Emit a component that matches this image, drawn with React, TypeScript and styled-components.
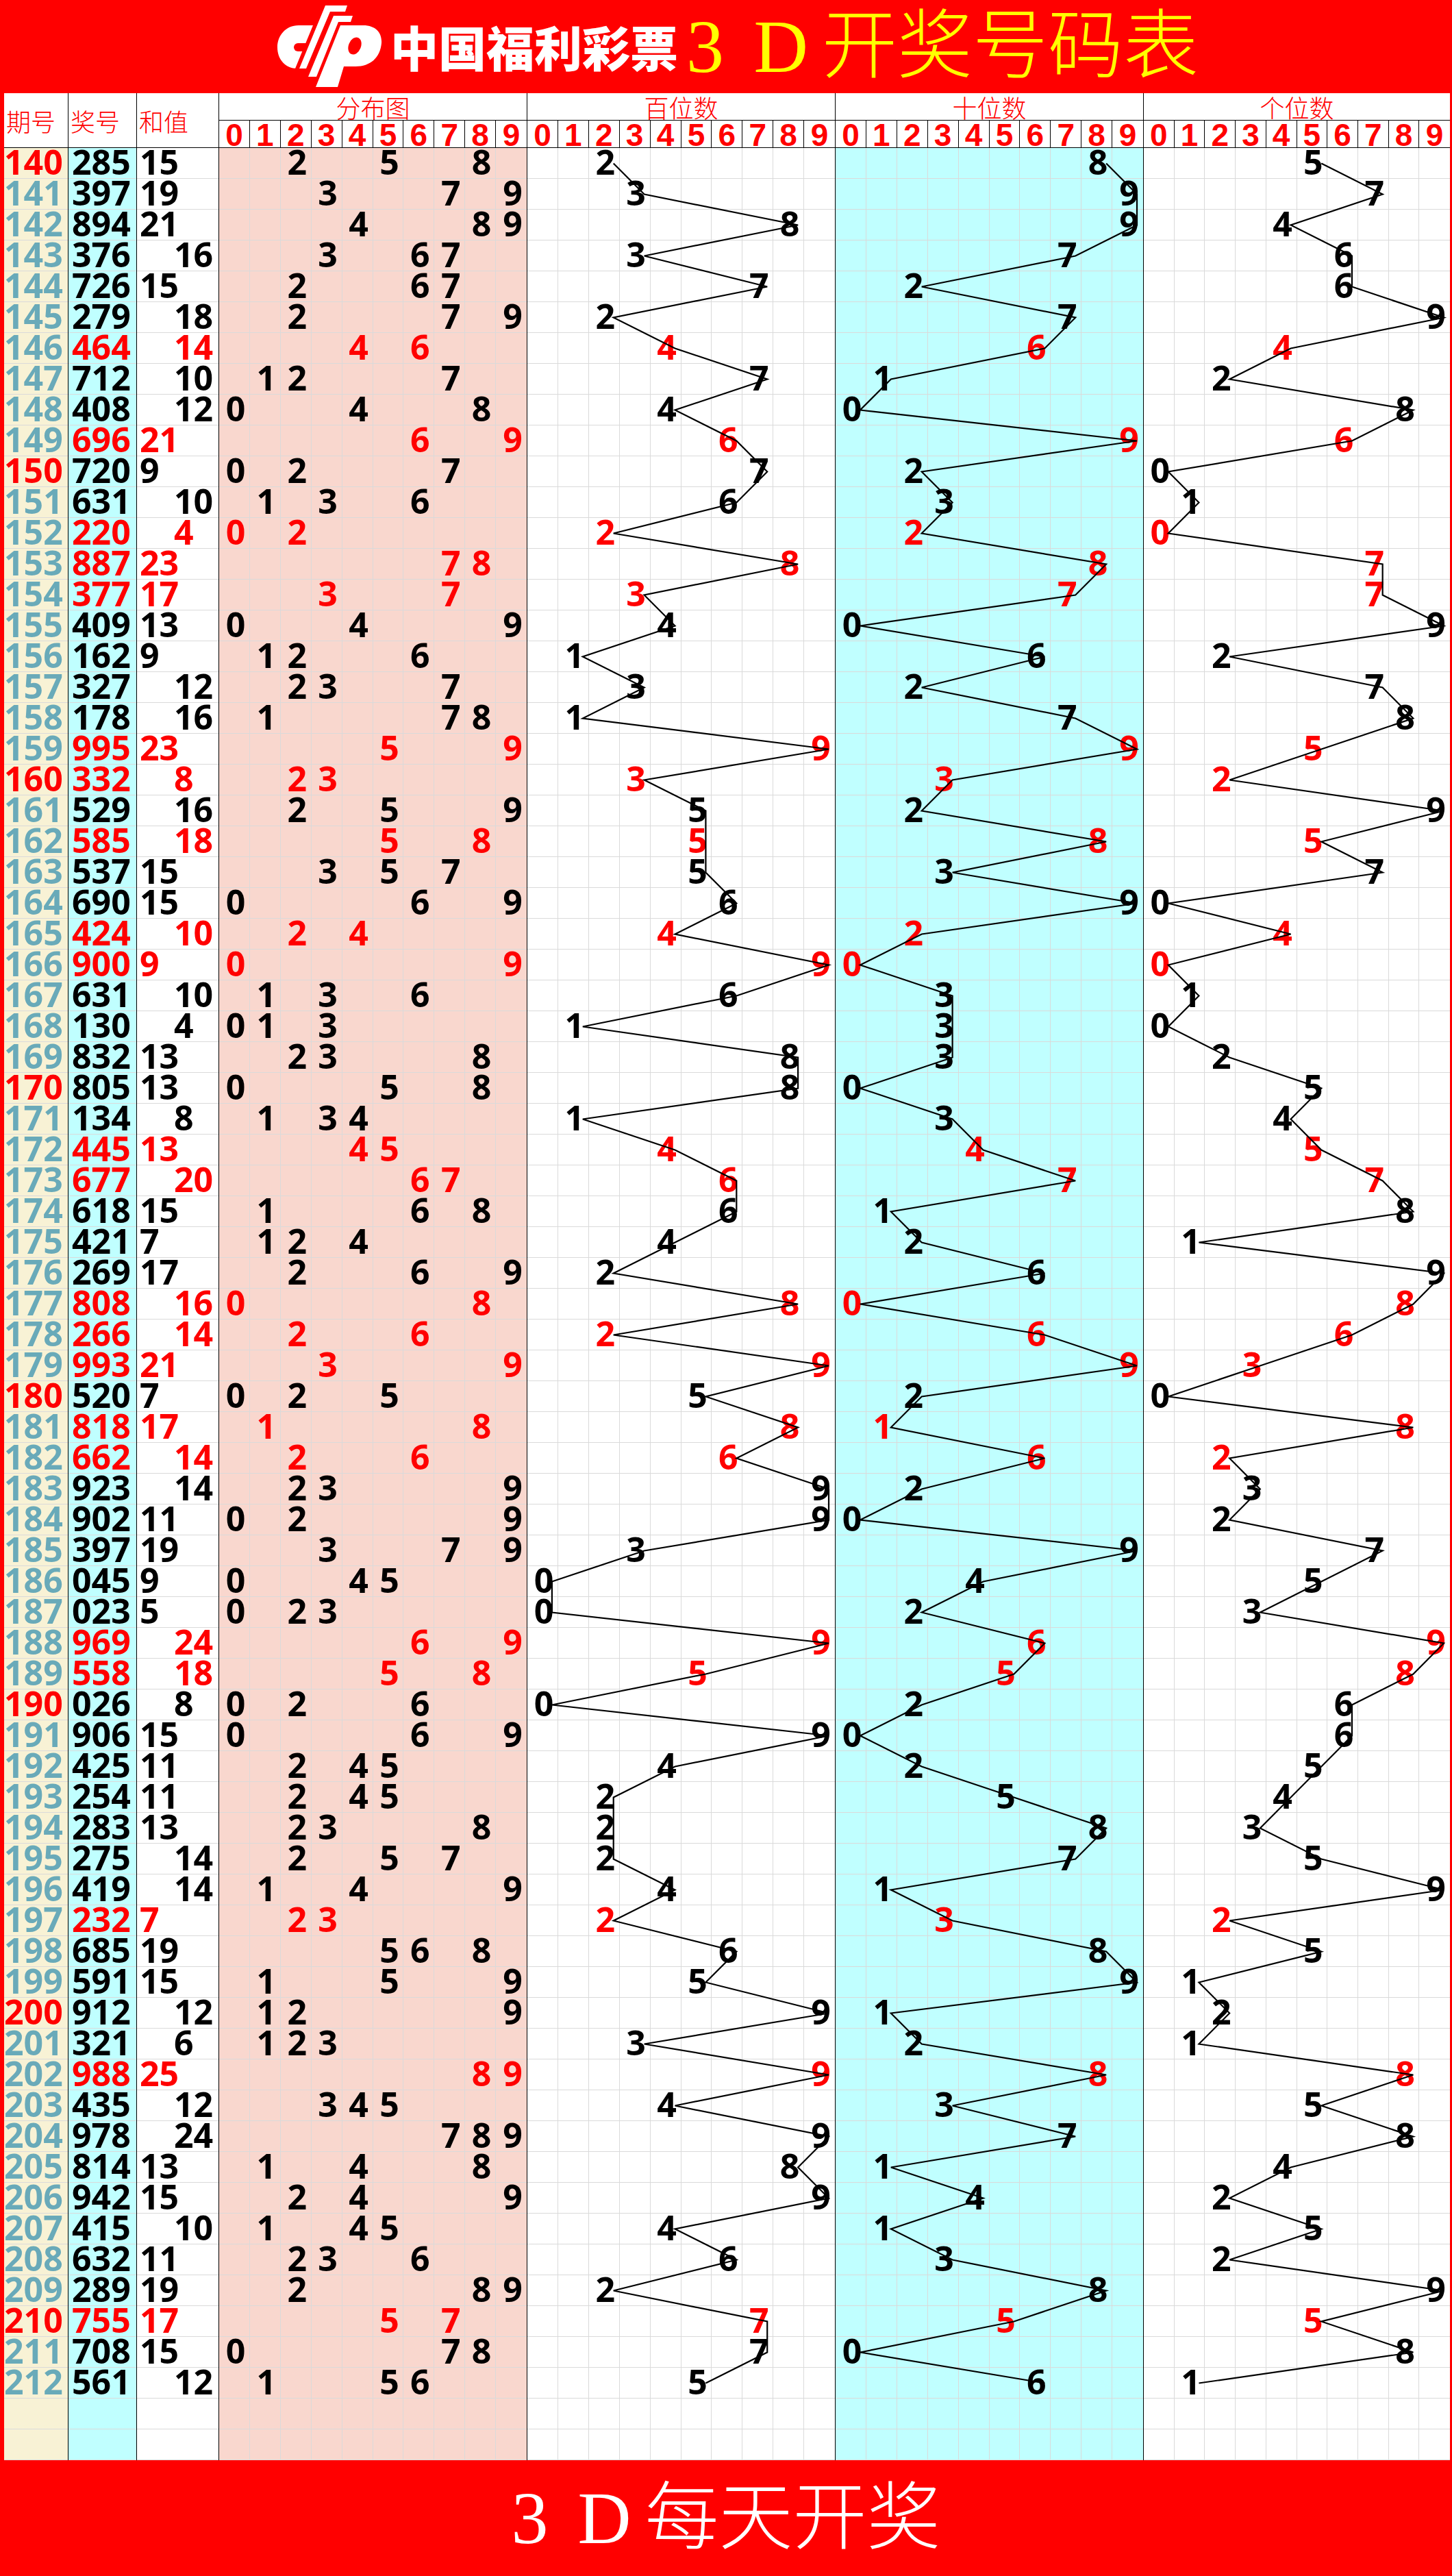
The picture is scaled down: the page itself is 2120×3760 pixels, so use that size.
import React from 'react'
import styled, { createGlobalStyle } from 'styled-components'

const DRAWS = [
  '140 285', '141 397', '142 894', '143 376', '144 726', '145 279', '146 464', '147 712', '148 408', '149 696',
  '150 720', '151 631', '152 220', '153 887', '154 377', '155 409', '156 162', '157 327', '158 178', '159 995',
  '160 332', '161 529', '162 585', '163 537', '164 690', '165 424', '166 900', '167 631', '168 130', '169 832',
  '170 805', '171 134', '172 445', '173 677', '174 618', '175 421', '176 269', '177 808', '178 266', '179 993',
  '180 520', '181 818', '182 662', '183 923', '184 902', '185 397', '186 045', '187 023', '188 969', '189 558',
  '190 026', '191 906', '192 425', '193 254', '194 283', '195 275', '196 419', '197 232', '198 685', '199 591',
  '200 912', '201 321', '202 988', '203 435', '204 978', '205 814', '206 942', '207 415', '208 632', '209 289',
  '210 755', '211 708', '212 561',
]

const RED = '#ff0000'
const TEAL = '#69aab9'
const CREAM = '#f8f2d5'
const CYAN = '#c0ffff'
const SALMON = '#f9d7ce'
const GRID = '#dadada'
const ROW_H = 45
const EMPTY_ROWS = 2

interface IDraw {
  issue: number
  code: string
  digits: number[]
  sum: number
  pair: boolean
}

const draws: IDraw[] = DRAWS.map((line) => {
  const [issue, code] = line.split(' ')
  const digits = code.split('').map(Number)
  return {
    issue: Number(issue),
    code,
    digits,
    sum: digits.reduce((a, b) => a + b, 0),
    pair: new Set(digits).size < 3,
  }
})

const TOTAL_ROWS = draws.length + EMPTY_ROWS
const DIGITS = [0, 1, 2, 3, 4, 5, 6, 7, 8, 9]

const GlobalStyle = createGlobalStyle`
  html, body {
    margin: 0;
    padding: 0;
    background: ${RED};
  }
  body {
    width: 2120px;
  }
`

const S = {
  Page: styled.div`
    width: 2120px;
    display: flex;
    flex-direction: column;
    background: ${RED};
  `,

  Banner: styled.header`
    height: 136px;
    box-sizing: border-box;
    padding-left: 400px;
    display: flex;
    align-items: center;
  `,

  Brand: styled.span`
    margin-left: 5px;
    font-family: "Noto Sans CJK SC", sans-serif;
    font-weight: 900;
    font-size: 70px;
    line-height: 1;
    color: #fff;
    white-space: nowrap;
  `,

  Title: styled.span<{ $size: number; $color: string; $gap?: number }>`
    margin-left: ${(p) => p.$gap || 0}px;
    font-family: "Liberation Serif", "Noto Sans CJK SC", serif;
    font-weight: 300;
    font-size: ${(p) => p.$size}px;
    line-height: 1;
    color: ${(p) => p.$color};
    white-space: nowrap;
  `,

  Latin: styled.span`
    font-weight: 400;
    letter-spacing: 8px;
    margin-right: 12px;
  `,

  Table: styled.div`
    display: flex;
    margin: 0 3px 0 6px;
    background: #fff;
  `,

  InfoCol: styled.div<{ $w: number }>`
    width: ${(p) => p.$w}px;
    flex-shrink: 0;
    box-sizing: border-box;
    border-right: 1px solid #000;
    display: flex;
    flex-direction: column;
  `,

  InfoHead: styled.div`
    height: 80px;
    box-sizing: border-box;
    border-bottom: 1px solid #000;
    padding-left: 3px;
    display: flex;
    align-items: center;
    font-family: "Noto Sans CJK SC", serif;
    font-weight: 300;
    font-size: 36px;
    color: ${RED};
    white-space: nowrap;
  `,

  InfoBody: styled.div<{ $bg: string }>`
    background: ${(p) => p.$bg};
  `,

  InfoCell: styled.div<{ $indent: number; $color: string }>`
    height: ${ROW_H}px;
    box-sizing: border-box;
    border-bottom: 1px solid ${GRID};
    padding-left: ${(p) => p.$indent}px;
    font: 700 50px/41px "Open Sans", sans-serif;
    color: ${(p) => p.$color};
    white-space: nowrap;
  `,

  Section: styled.div<{ $last?: boolean }>`
    ${(p) => (p.$last ? 'flex: 1;' : 'width: 450px; flex-shrink: 0;')}
    min-width: 0;
    box-sizing: border-box;
    border-right: ${(p) => (p.$last ? 'none' : '1px solid #000')};
    display: flex;
    flex-direction: column;
  `,

  SectionTitle: styled.div`
    height: 40px;
    box-sizing: border-box;
    border-bottom: 1px solid #000;
    text-align: center;
    font-family: "Noto Sans CJK SC", serif;
    font-weight: 300;
    font-size: 36px;
    line-height: 40px;
    color: ${RED};
  `,

  DigitHead: styled.div`
    display: grid;
    grid-template-columns: repeat(10, 1fr);
    height: 40px;
    box-sizing: border-box;
    border-bottom: 1px solid #000;
  `,

  HeadDigit: styled.div`
    min-width: 0;
    border-right: 1px solid #000;
    &:last-child {
      border-right: none;
    }
    text-align: center;
    font: 700 46px/42px "Liberation Sans", Arial, sans-serif;
    color: ${RED};
  `,

  SectionBody: styled.div<{ $bg: string }>`
    position: relative;
    background: ${(p) => p.$bg};
  `,

  GridRow: styled.div`
    display: grid;
    grid-template-columns: repeat(10, 1fr);
    height: ${ROW_H}px;
    box-sizing: border-box;
    border-bottom: 1px solid ${GRID};
  `,

  Cell: styled.div<{ $color: string }>`
    min-width: 0;
    border-right: 1px solid ${GRID};
    &:last-child {
      border-right: none;
    }
    padding-left: 4px;
    text-align: center;
    font: 700 50px/41px "Open Sans", sans-serif;
    color: ${(p) => p.$color};
    white-space: nowrap;
  `,

  Trend: styled.svg`
    position: absolute;
    left: 0;
    top: 0;
    width: 100%;
    height: 100%;
    overflow: visible;
    pointer-events: none;
  `,

  Footer: styled.footer`
    height: 169px;
    display: flex;
    align-items: center;
    justify-content: center;
  `,
}

const Logo = () => (
  <svg width="165" height="136" viewBox="10 0 165 136">
    <path fill="#fff" d="M67 37 L46 37 C27 37 15 52 15 69 C15 87 27 100 44 100 L41 100 Z" />
    <path fill={RED} d="M45 63 L59 63 L54 75 L45 75 A6 6 0 0 1 45 63 Z" />
    <path fill="#fff" d="M85 8 L117 8 L114 17 L92 17 L57 100 L47 100 Z" />
    <path fill="#fff" d="M97 23 L125 23 L122 32 L104 32 L72 112 L60 112 Z" />
    <path
      fill="#fff"
      d="M107 37 L140 37 C160 37 168 49 167 63 C165 84 151 97 129 97 L112 97 L103 127 L71 127 Z"
    />
    <ellipse cx="128" cy="67" rx="9" ry="13" fill={RED} transform="rotate(22 128 67)" />
  </svg>
)

const InfoColumn = ({
  label,
  width,
  bg,
  render,
}: {
  label: string
  width: number
  bg: string
  render: (d: IDraw) => { text: string; indent: number; color: string }
}) => (
  <S.InfoCol $w={width}>
    <S.InfoHead>{label}</S.InfoHead>
    <S.InfoBody $bg={bg}>
      {draws.map((d) => {
        const c = render(d)
        return (
          <S.InfoCell key={d.issue} $indent={c.indent} $color={c.color}>
            {c.text}
          </S.InfoCell>
        )
      })}
      {Array.from({ length: EMPTY_ROWS }).map((_, i) => (
        <S.InfoCell key={'e' + i} $indent={0} $color="#000" />
      ))}
    </S.InfoBody>
  </S.InfoCol>
)

interface ISectionProps {
  title: string
  bg: string
  last?: boolean
  pos?: number
}

const DigitSection = ({ title, bg, last, pos }: ISectionProps) => {
  // trend line joins each draw's digit, just right of the glyph
  const trend =
    pos === undefined
      ? null
      : draws.map((d, i) => `${d.digits[pos] * 10 + 8},${i * ROW_H + ROW_H / 2}`).join(' ')

  return (
    <S.Section $last={last}>
      <S.SectionTitle>{title}</S.SectionTitle>
      <S.DigitHead>
        {DIGITS.map((n) => (
          <S.HeadDigit key={n}>{n}</S.HeadDigit>
        ))}
      </S.DigitHead>
      <S.SectionBody $bg={bg}>
        {draws.map((d) => {
          const color = d.pair ? RED : '#000'
          return (
            <S.GridRow key={d.issue}>
              {DIGITS.map((n) => {
                const show = pos === undefined ? d.digits.includes(n) : d.digits[pos] === n
                return (
                  <S.Cell key={n} $color={color}>
                    {show ? n : ''}
                  </S.Cell>
                )
              })}
            </S.GridRow>
          )
        })}
        {Array.from({ length: EMPTY_ROWS }).map((_, i) => (
          <S.GridRow key={'e' + i}>
            {DIGITS.map((n) => (
              <S.Cell key={n} $color="#000" />
            ))}
          </S.GridRow>
        ))}
        {trend && (
          <S.Trend viewBox={`0 0 100 ${TOTAL_ROWS * ROW_H}`} preserveAspectRatio="none">
            <polyline
              points={trend}
              fill="none"
              stroke="#000"
              strokeWidth={2.2}
              strokeLinejoin="miter"
              vectorEffect="non-scaling-stroke"
            />
          </S.Trend>
        )}
      </S.SectionBody>
    </S.Section>
  )
}

const App = () => (
  <S.Page>
    <GlobalStyle />
    <S.Banner>
      <Logo />
      <S.Brand>中国福利彩票</S.Brand>
      <S.Title $size={110} $color="#ffff00" $gap={12}>
        <S.Latin>3 D</S.Latin>开奖号码表
      </S.Title>
    </S.Banner>

    <S.Table>
      <InfoColumn
        label="期号"
        width={94}
        bg={CREAM}
        render={(d) => ({ text: String(d.issue), indent: 0, color: d.issue % 10 === 0 ? RED : TEAL })}
      />
      <InfoColumn
        label="奖号"
        width={100}
        bg={CYAN}
        render={(d) => ({ text: d.code, indent: 5, color: d.pair ? RED : '#000' })}
      />
      <InfoColumn
        label="和值"
        width={120}
        bg="#fff"
        render={(d) => ({
          text: String(d.sum),
          indent: d.sum % 2 === 0 ? 54 : 4,
          color: d.pair ? RED : '#000',
        })}
      />
      <DigitSection title="分布图" bg={SALMON} />
      <DigitSection title="百位数" bg="#fff" pos={0} />
      <DigitSection title="十位数" bg={CYAN} pos={1} />
      <DigitSection title="个位数" bg="#fff" pos={2} last />
    </S.Table>

    <S.Footer>
      <S.Title $size={108} $color="#fff">
        <S.Latin>3 D</S.Latin>每天开奖
      </S.Title>
    </S.Footer>
  </S.Page>
)

export default App
